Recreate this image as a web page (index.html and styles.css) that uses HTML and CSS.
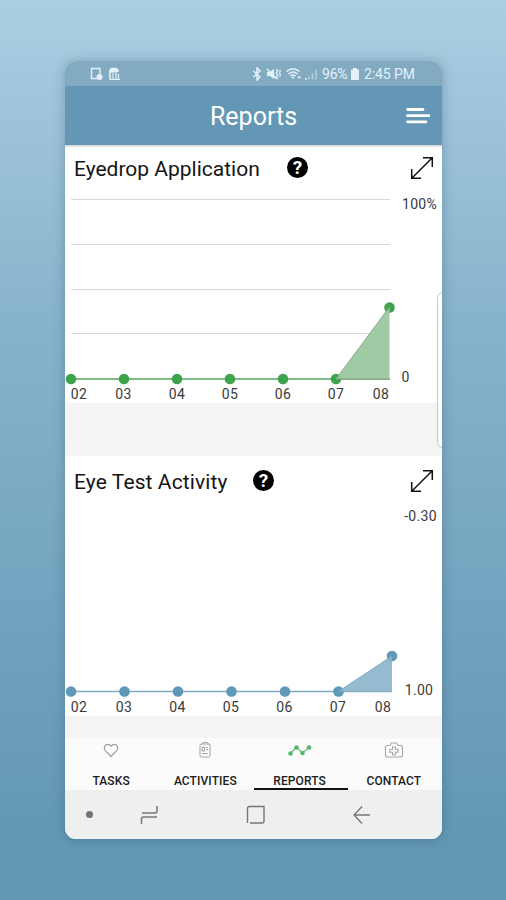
FILE: index.html
```html
<!DOCTYPE html>
<html lang="en">
<head>
    <meta charset="UTF-8">
    <meta name="viewport" content="width=device-width, initial-scale=1.0">
    <title>Reports</title>
    <link rel="stylesheet" href="styles.css">
</head>
<body>

<div class="phone">
    <div class="status-bar">
        <svg class="status-left" width="32" height="14" viewBox="0 0 32 14">
            <path d="M7 11.5H1.5V1.5H10V7" fill="none" stroke="currentColor" stroke-width="1.4"/>
            <circle cx="9.5" cy="10" r="3" fill="currentColor"/>
            <path d="M20 12.500V3.500L22 1.500H26L28 3.500V5" fill="none" stroke="currentColor" stroke-width="1.600"/>
            <path d="M20.500 2H27V5H20.500zM23 6V12M26 6V12M28.500 7V12M20 12.500H30" fill="currentColor" stroke="currentColor" stroke-width="1.2"/>
        </svg>
        <div class="status-right">
            <svg width="70" height="14" viewBox="0 0 70 14">
                <g fill="none" stroke="currentColor" stroke-width="1.5">
                    <path d="M2.5 4L9 10L6 13V1L9 4L2.5 10"/>
                    <path d="M25 2L27 4L25 6L27 8L25 10L27 12M28.5 3L29.5 4L28.5 6L29.5 8L28.5 10" stroke-width="1.1"/>
                    <path d="M16 2L26 12"/>
                    <path d="M35.5 4.5Q42 -1 48.5 4.5M37.5 7Q42 3 46.5 7M39.5 9.3Q42 7 44.5 9.3"/>
                    <path d="M48 8V12M46.5 10.5H50" stroke-width=".8"/>
                </g>
                <path d="M16 5H19L23 2V12L19 9H16z" fill="currentColor"/>
                <path d="M40.5 10H43.5L42 12zM54 11H56V12.5H54z" fill="currentColor"/>
                <path d="M58 9.5V12.5M61.5 6.5V12.5M65 3V12.5" stroke="currentColor" stroke-width="1.5" opacity=".55"/>
            </svg>
            <span class="battery-level">96%</span>
            <svg width="10" height="14" viewBox="0 0 10 14">
                <path d="M3 1H7V2.5H9V13H1V2.5H3z" fill="currentColor"/>
            </svg>
            <span class="clock">2:45 PM</span>
        </div>
    </div>

    <div class="header">
        <h1>Reports</h1>
        <svg class="menu" width="26" height="20" viewBox="0 0 26 20">
            <path d="M3.5 3.5H19M3.5 9.7H25M3.5 15.8H22" stroke="#fff" stroke-width="2.8" stroke-linecap="round"/>
        </svg>
    </div>

    <div class="panel eyedrop">
        <div class="panel-title">
            <h2>Eyedrop Application</h2>
            <div class="help">?</div>
            <svg class="expand" width="24" height="24" viewBox="0 0 24 24">
                <path d="M2.5 21.500L21.500 2.500M13 1.700H22.300V11M1.700 13V22.300H11" fill="none" stroke="#111" stroke-width="1.5"/>
            </svg>
        </div>
        <svg class="chart" width="377" height="213" viewBox="0 0 377 213">
            <path class="grid" d="M6 9.5H325M6 54.5H325M6 99.5H325M6 143.5H325"/>
            <path class="line" d="M6 189H325"/>
            <g class="dots">
                <circle cx="6" cy="189" r="5.3"/>
                <circle cx="59" cy="189" r="5.3"/>
                <circle cx="112" cy="189" r="5.3"/>
                <circle cx="165" cy="189" r="5.3"/>
                <circle cx="218" cy="189" r="5.3"/>
                <circle cx="271" cy="189" r="5.3"/>
                <circle cx="324.5" cy="117.5" r="5.3"/>
            </g>
            <path class="area" d="M271 189L324.5 117V189z"/>
            <path class="base" d="M271 189H325"/>
            <path class="edge" d="M271 189L324.5 117"/>
            <g class="labels">
                <text x="14" y="209">02</text>
                <text x="58.5" y="209">03</text>
                <text x="112" y="209">04</text>
                <text x="165" y="209">05</text>
                <text x="218" y="209">06</text>
                <text x="271" y="209">07</text>
                <text x="316" y="209">08</text>
                <text x="354.5" y="18.5">100%</text>
                <text x="340.5" y="192">0</text>
            </g>
        </svg>
    </div>

    <div class="panel eye-test">
        <div class="panel-title">
            <h2>Eye Test Activity</h2>
            <div class="help">?</div>
            <svg class="expand" width="24" height="24" viewBox="0 0 24 24">
                <path d="M2.5 21.500L21.500 2.500M13 1.700H22.300V11M1.700 13V22.300H11" fill="none" stroke="#111" stroke-width="1.5"/>
            </svg>
        </div>
        <svg class="chart" width="377" height="213" viewBox="0 0 377 213">
            <path class="line" d="M6 189.5H327"/>
            <g class="dots">
                <circle cx="6" cy="189.5" r="5.3"/>
                <circle cx="59.5" cy="189.5" r="5.3"/>
                <circle cx="113" cy="189.5" r="5.3"/>
                <circle cx="166.5" cy="189.5" r="5.3"/>
                <circle cx="220" cy="189.5" r="5.3"/>
                <circle cx="273.5" cy="189.5" r="5.3"/>
                <circle cx="327" cy="154" r="5.3"/>
            </g>
            <path class="area" d="M273.5 189.5L327 154V189.5z"/>
            <path class="edge" d="M273.5 189.5L327 154"/>
            <g class="labels">
                <text x="14" y="210">02</text>
                <text x="59" y="210">03</text>
                <text x="112.5" y="210">04</text>
                <text x="166" y="210">05</text>
                <text x="219.5" y="210">06</text>
                <text x="273" y="210">07</text>
                <text x="318" y="210">08</text>
                <text x="355.5" y="19">-0.30</text>
                <text x="354" y="192.5">1.00</text>
            </g>
        </svg>
    </div>

    <div class="tabs">
        <div class="tab">
            <svg width="24" height="18" viewBox="0 0 24 18">
                <path d="M12 15.5L6.500 9.800C3.500 6.500 7.500 0.500 12 5C16.500 0.500 20.500 6.500 17.500 9.800z" fill="none" stroke="#969c9c" stroke-width="1.1"/>
            </svg>
            <span>TASKS</span>
        </div>
        <div class="tab">
            <svg width="24" height="18" viewBox="0 0 24 18">
                <g fill="none" stroke="#a0a4a4" stroke-width="1">
                    <path d="M8.5 3.5L10 1.5H14.5L16 3.5M8.5 3H16Q17 3 17 4.5V14.5Q17 16 15.5 16H8.5Q7 16 7 14.5V4.5Q7 3 8.5 3z"/>
                    <path d="M9 6.5H11.5V10H9zM13 6.5H15M13 8.5H15M9 12.5H15"/>
                </g>
            </svg>
            <span>ACTIVITIES</span>
        </div>
        <div class="tab active">
            <svg width="24" height="18" viewBox="0 0 24 18">
                <path d="M2.500 12.500L8.500 6.500L14.500 12L21 6.500" fill="none" stroke="#6ebe7c" stroke-width="1.3"/>
                <g fill="#57b567">
                    <circle cx="2.5" cy="12.5" r="2.3"/>
                    <circle cx="8.5" cy="6.5" r="2.2"/>
                    <circle cx="14.5" cy="12" r="2.3"/>
                    <circle cx="21" cy="6.5" r="2.3"/>
                </g>
            </svg>
            <span>REPORTS</span>
        </div>
        <div class="tab">
            <svg width="24" height="18" viewBox="0 0 24 18">
                <g fill="none" stroke="#a0a8ae" stroke-width="1.1">
                    <path d="M5.500 4.500H8L9.500 2H14.500L16 4.500H18.500Q20.500 4.500 20.500 6.500V14Q20.500 16 18.500 16H5.500Q3.500 16 3.500 14V6.500Q3.500 4.500 5.500 4.500z"/>
                    <path d="M10.5 6H13.5V8.300H16V11.300H13.500V13.800H10.500V11.300H8V8.300H10.500z"/>
                </g>
            </svg>
            <span>CONTACT</span>
        </div>
    </div>

    <div class="nav-bar">
        <div class="nav-dot"></div>
        <svg class="nav-recent" width="20" height="20" viewBox="0 0 20 20">
            <path d="M2 8H15Q17 8 17 6V1M1.5 19V14Q1.5 12 3.5 12H17" fill="none" stroke="#777" stroke-width="1.5"/>
        </svg>
        <svg class="nav-home" width="20" height="20" viewBox="0 0 20 20">
            <path d="M1.5 18V3.5Q1.5 1.5 3.5 1.5H18V16Q18 18 16 18H4" fill="none" stroke="#777" stroke-width="1.4"/>
        </svg>
        <svg class="nav-back" width="20" height="20" viewBox="0 0 20 20">
            <path d="M18 10H2M10 1.5L2 10L10 18.5" fill="none" stroke="#777" stroke-width="1.3"/>
        </svg>
    </div>

    <div class="edge-handle"></div>
</div>

</body>
</html>
```
FILE: styles.css
```css
* {
    box-sizing: border-box;
}

body {
    margin: 0;
    height: 900px;
    padding: 61px 64px 0 65px;
    background: linear-gradient(#abcee2, #88b3cc 35%, #6398b4 92%);
    font-family: Roboto, sans-serif;
    overflow: hidden;
}

.phone {
    position: relative;
    height: 778px;
    border-radius: 11px;
    overflow: hidden;
    background: #f5f5f5;
    box-shadow: 0 1px 12px rgba(40, 75, 95, 0.35);
}

.status-bar {
    height: 25px;
    padding: 0 27px 0 25px;
    display: flex;
    align-items: center;
    justify-content: space-between;
    background: #82abc2;
    color: #e4f1f8;
    font-size: 14px;
}

.status-right {
    display: flex;
    align-items: center;
}

.battery-level {
    width: 28px;
    letter-spacing: -0.2px;
    margin-left: 1px;
}

.clock {
    margin-left: 4px;
    width: 51px;
    letter-spacing: -0.1px;
    white-space: nowrap;
}

.header {
    height: 59px;
    display: flex;
    align-items: center;
    background: #6497b5;
    color: white;
}

.header h1 {
    flex: 1;
    margin: 2px 0 0 38px;
    font-size: 25px;
    font-weight: 400;
    text-align: center;
}

.menu {
    margin-right: 12px;
}

.panel {
    background: white;
}

.eyedrop {
    height: 258px;
    box-shadow: inset 0 3px 3px -2px rgba(0, 0, 0, 0.25);
}

.eye-test {
    height: 260px;
    margin-top: 53px;
}

.panel-title {
    height: 45px;
    padding: 0 8px 0 9px;
    display: flex;
    align-items: center;
}

.eye-test .panel-title {
    height: 46px;
    padding-top: 3px;
}

.panel-title h2 {
    margin: 2px 0 0;
    font-size: 21px;
    font-weight: 400;
    color: #151515;
    white-space: nowrap;
}

.eyedrop h2 {
    width: 213px;
}

.eye-test h2 {
    width: 179px;
    letter-spacing: 0.1px;
}

.help {
    width: 21px;
    height: 21px;
    border-radius: 50%;
    background: black;
    color: white;
    font-size: 19px;
    font-weight: 700;
    line-height: 22px;
    text-align: center;
}

.expand {
    margin-left: auto;
}

.chart {
    display: block;
}

.grid {
    stroke: #d8d8d8;
    stroke-width: 1;
}

.line {
    stroke-width: 1.5;
}

.eyedrop .line {
    stroke: #52a35c;
}

.eyedrop .dots {
    fill: #3da44b;
}

.eyedrop .area {
    fill: #98c79d;
    opacity: 0.93;
}

.edge {
    fill: none;
    stroke-width: 1;
}

.eyedrop .edge,
.base {
    stroke: #8fa58f;
}

.eye-test .line,
.eye-test .edge {
    stroke: #7fabc4;
}

.eye-test .dots {
    fill: #5f98b8;
}

.eye-test .area {
    fill: #8bb3ca;
    opacity: 0.9;
}

.labels {
    fill: #3a3a3a;
    font-size: 14px;
    text-anchor: middle;
    letter-spacing: 0.3px;
}

.tabs {
    height: 52px;
    margin-top: 22px;
    display: grid;
    grid-template-columns: repeat(4, 1fr);
    background: #fbfbfb;
}

.tab {
    display: flex;
    flex-direction: column;
    align-items: center;
    justify-content: space-between;
    padding: 3px 2px 0 0;
    border-bottom: 2px solid transparent;
    font-size: 12px;
    font-weight: 500;
    line-height: 14px;
    letter-spacing: 0.1px;
    color: #1c1c1c;
}

.tab.active {
    border-bottom-color: #111;
}

.nav-bar {
    height: 49px;
    padding-left: 21px;
    display: flex;
    align-items: center;
    background: #efefef;
}

.nav-dot {
    width: 7px;
    height: 7px;
    border-radius: 50%;
    background: #747474;
}

.nav-recent {
    margin-left: 47px;
}

.nav-home {
    margin-left: 86px;
}

.nav-back {
    margin-left: 86px;
}

.edge-handle {
    position: absolute;
    top: 231px;
    right: -6px;
    width: 11px;
    height: 156px;
    border: 1px solid #c6c6c6;
    border-radius: 6px;
    background: rgba(255, 255, 255, 0.8);
}
```
